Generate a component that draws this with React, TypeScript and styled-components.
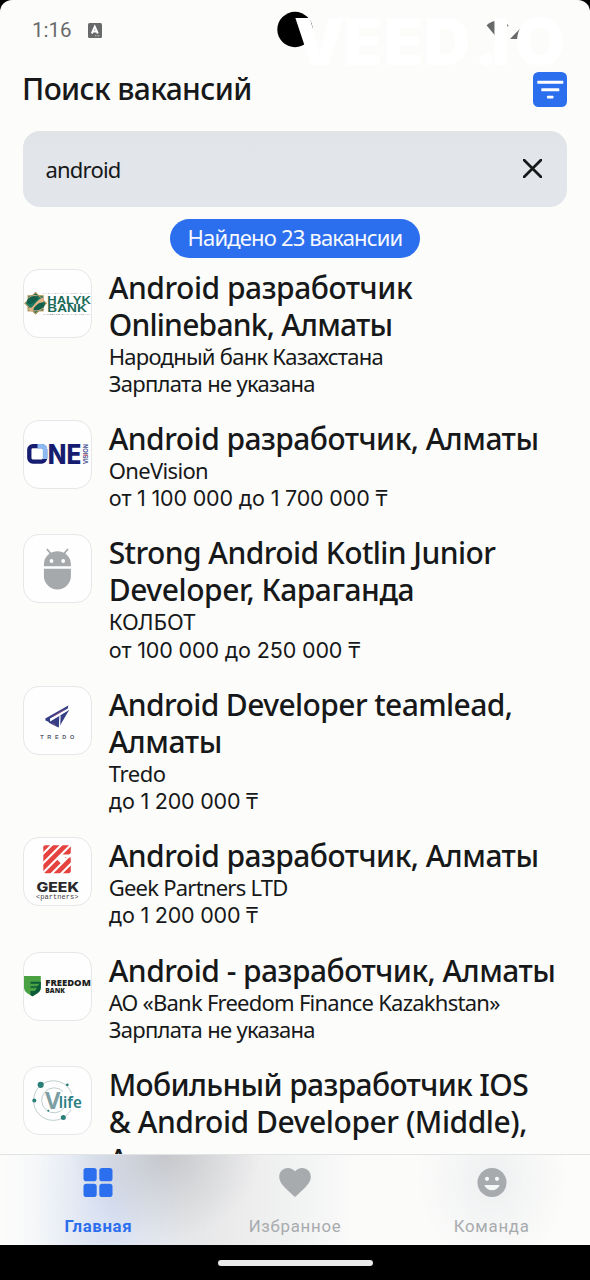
import React from 'react';
import styled, { createGlobalStyle, css } from 'styled-components';

const ink = '#161819';
const blue = '#2c6fee';
const muted = '#a8abae';

const GlobalStyle = createGlobalStyle`
  * { box-sizing: border-box; }
  body { margin: 0; background: #000; }
`;

const Screen = styled.div`
  width: 590px;
  height: 1280px;
  display: flex;
  flex-direction: column;
  background: #000;
  color: ${ink};
  font-family: 'Noto Sans', sans-serif;
  overflow: hidden;
`;

const Page = styled.div`
  height: 1245px;
  display: flex;
  flex-direction: column;
  background: #fcfcfa;
  border-radius: 12px 12px 0 0;
  overflow: hidden;
`;

const StatusBar = styled.div`
  position: relative;
  height: 60px;
  flex: none;
  display: flex;
  align-items: center;
  gap: 16.5px;
  padding: 0 0 0 32px;
  color: #68696a;
  font: 400 20.5px/60px Roboto, sans-serif;
`;

const StatusArt = styled.svg`
  position: absolute;
  left: 270px;
  top: 0;
  overflow: visible;
`;

const Header = styled.header`
  height: 60px;
  margin-top: -1px;
  padding: 0 23px 0 22px;
  flex: none;
  display: flex;
  align-items: center;
  justify-content: space-between;
`;

const Heading = styled.h1`
  margin: 0;
  font-size: 30px;
  font-weight: 500;
  line-height: 40px;
  letter-spacing: -0.62px;
`;

const FilterButton = styled.button`
  width: 34.5px;
  height: 35px;
  padding: 0;
  border: 0;
  border-radius: 5.5px;
  background: ${blue};
  display: block;
`;

const SearchField = styled.div`
  margin: 11.5px 23px 0;
  height: 76.5px;
  flex: none;
  display: flex;
  align-items: center;
  justify-content: space-between;
  padding: 0 25px 0.5px 22.5px;
  border-radius: 17px;
  background: linear-gradient(#e0e4e7, #e2e5ea 40%);
  font-size: 22px;
  letter-spacing: -0.8px;
`;

const CountPill = styled.div`
  align-self: center;
  margin-top: 11.5px;
  width: 249.5px;
  height: 39px;
  flex: none;
  border-radius: 20px;
  background: ${blue};
  color: #f6f9ff;
  text-align: center;
  font-size: 22px;
  line-height: 37.5px;
  letter-spacing: -0.83px;
`;

const List = styled.main`
  flex: 1;
  min-height: 0;
  margin-top: 11.1px;
  overflow: hidden;
`;

const Item = styled.article`
  display: flex;
  gap: 17px;
  padding: 0 0 22.9px 22.7px;
`;

const Logo = styled.div`
  width: 69px;
  height: 69px;
  flex: none;
  border: 1px solid #e6e7e8;
  border-radius: 16px;
  background: #fefefe;
  overflow: hidden;
  svg { display: block; }
`;

const Lines = styled.div`
  flex: 1;
  white-space: nowrap;
`;

const line = css<{ $track: number }>`
  white-space: pre;
  letter-spacing: ${p => p.$track}px;
`;

const Title = styled.div<{ $track: number }>`
  ${line}
  font-size: 30px;
  font-weight: 500;
  line-height: 37px;

  &:nth-child(3) { padding-top: 1px; }
`;

const Detail = styled.div<{ $track: number }>`
  ${line}
  font-size: 22px;
  line-height: 27.25px;
  height: 27.25px;
`;

const Salary = styled(Detail)`
  font-family: Inter, sans-serif;
  font-size: 21.5px;
  line-height: 28.25px;
`;

const Tenge = styled.span`
  font-family: 'Noto Sans', sans-serif;
  font-size: 22px;
  line-height: 1;
`;

const NavBar = styled.nav`
  height: 91.5px;
  flex: none;
  display: flex;
  border-top: 1.5px solid #e2e3e5;
  background:
    radial-gradient(ellipse 95px 85px at 165px 0, rgba(178, 180, 184, 0.62), rgba(190, 192, 196, 0.42) 45%, rgba(220, 220, 220, 0)),
    radial-gradient(ellipse 75px 150px at 112px 50px, rgba(208, 220, 245, 0.7), rgba(215, 225, 245, 0.32) 50%, rgba(225, 231, 245, 0)),
    radial-gradient(ellipse 75px 90px at 492px 25px, rgba(236, 238, 240, 0.9), rgba(245, 246, 247, 0)),
    linear-gradient(90deg, #fcfcfa 0, #f9fafa 20px, #f1f4f7 50px, #e6eaf1 90px, #e6e8ed 140px, #e6e7e8 190px, #ececed 240px, #f3f4f4 310px, #fbfbfa 355px, #fcfcfa 100%);
`;

const NavItem = styled.a<{ $active?: boolean }>`
  flex: 1;
  display: flex;
  flex-direction: column;
  align-items: center;
  padding-top: 11px;
  gap: 17px;
  color: ${p => (p.$active ? blue : muted)};
  font: ${p => (p.$active ? 700 : 400)} 16.8px/22px Roboto, sans-serif;
  letter-spacing: ${p => (p.$active ? 0.65 : 0.75)}px;
`;

const HomeBar = styled.div`
  width: 155px;
  height: 6px;
  margin: 15px auto 0;
  border-radius: 3px;
  background: #ebebeb;
`;

const Halyk = () => (
  <svg width="67" height="67" viewBox="1 1 67 67">
    <g transform="translate(12.6 34.3)">
      <rect x="-7.6" y="-7.6" width="15.2" height="15.2" fill="#1d7a62" stroke="#b79a5f" strokeWidth="1" />
      <rect x="-7.6" y="-7.6" width="15.2" height="15.2" fill="#1d7a62" stroke="#b79a5f" strokeWidth="1" transform="rotate(45)" />
      <path d="M-9.500 5C-5 6-3 3.500-1 1S4-5 8-5.500C9 0 6 0 3.500 2S-1 8-4 8.500Z" fill="#e2b184" />
      <ellipse cx="-3" cy="-4" rx="6.500" ry="3.600" transform="rotate(-35 -3 -4)" fill="#125f4c" />
      <ellipse cx="3.500" cy="3.800" rx="6.500" ry="3.300" transform="rotate(-35 3.500 3.800)" fill="#125f4c" />
      <path d="M-7-5C-5-8-1-8 2-7.500M-2 7.500C2 8 5 7 7.500 4.500" fill="none" stroke="#e2b184" strokeWidth="1" />
    </g>
    <g fill="#1b6b58" fontFamily="Liberation Sans, sans-serif">
      <text x="20" y="24.600" fontSize="2.300" textLength="47.500" fill="#777">КАЗАКСТАН ХАЛЫК БАНКІ</text>
      <text x="24.300" y="34.700" fontSize="10.600" fontWeight="700" textLength="43.500" lengthAdjust="spacingAndGlyphs">HALYK</text>
      <text x="24.300" y="42.700" fontSize="10.600" fontWeight="700" textLength="39.500" lengthAdjust="spacingAndGlyphs">BANK</text>
      <text x="20" y="46.300" fontSize="2.300" textLength="47.500" fill="#555">НАРОДНЫЙ БАНК КАЗАХСТАНА</text>
    </g>
  </svg>
);

const OneVision = () => (
  <svg width="67" height="67" viewBox="1 1 67 67">
    <rect x="6.300" y="26.200" width="15.800" height="15.400" rx="3.500" fill="none" stroke="#161d70" strokeWidth="4.300" />
    <path d="M14.500 26.200h4q3.600 0 3.600 3.600V39" fill="none" stroke="#8db9f2" strokeWidth="4.400" />
    <text x="24.800" y="43.700" fontFamily="Inter, sans-serif" fontWeight="800" fontSize="27" fill="#161d70" textLength="33.500" lengthAdjust="spacingAndGlyphs">NE</text>
    <text transform="translate(65 44) rotate(-90)" fontFamily="Liberation Sans, sans-serif" fontWeight="700" fontSize="6.500" fill="#46508f" textLength="20" lengthAdjust="spacingAndGlyphs">VISION</text>
    <path d="M60.500 35h4" stroke="#e0574f" strokeWidth="1" />
  </svg>
);

const Robot = () => (
  <svg width="67" height="67" viewBox="1 1 67 67" fill="#a5a9ac">
    <path d="M23.800 15l4.800 5.500M45 15l-4.800 5.500" stroke="#a5a9ac" strokeWidth="1.800" />
    <path d="M20.900 32.200V30a13.500 12.800 0 0 1 27 0v2.200Z" />
    <path d="M20.900 34.800h27v7.200a13.500 13.500 0 0 1-27 0Z" />
    <circle cx="28.500" cy="27" r="1.900" fill="#fff" />
    <circle cx="40.200" cy="27" r="1.900" fill="#fff" />
  </svg>
);

const Tredo = () => (
  <svg width="67" height="67" viewBox="1 1 67 67">
    <g fill="#343f86">
      <path d="M22.300 32.500 45.300 19.500 44.800 22.500 27 32.500 27 36.500 22.500 34.500Z" />
      <path d="M25.500 36.500 46.300 23.800 36 41.300 34.800 41.300Z" />
    </g>
    <path d="M27.500 34.300 44.500 24M37 29.500 36.500 41" stroke="#fefefe" strokeWidth="1.300" />
    <path d="M30 30.500 41 24M29.500 37l3 2" stroke="#c85872" strokeWidth=".6" />
    <text x="17.300" y="53" fontFamily="Liberation Sans, sans-serif" fontWeight="700" fontSize="5.500" fill="#51566b" textLength="34">TREDO</text>
  </svg>
);

const Geek = () => (
  <svg width="67" height="67" viewBox="1 1 67 67">
    <defs>
      <clipPath id="geekTile"><rect x="20.300" y="8.300" width="27.500" height="28" rx="2" /></clipPath>
    </defs>
    <g clipPath="url(#geekTile)">
      <path d="M16 16 32 0M16 25.500 41.500 0M16 35 51 0M18 42.500 36 24.500M41 19.500 52 8.500M26 44 54 16M36 43.500 54 25.500" stroke="#e5433f" strokeWidth="4.600" />
      <path d="M38 17.500h11v3h-11z" fill="#fefefe" />
    </g>
    <text x="13.500" y="54.500" fontFamily="Inter, sans-serif" fontWeight="800" fontSize="12.600" fill="#28292b" textLength="42.500" lengthAdjust="spacingAndGlyphs">GEEK</text>
    <text x="13" y="62" fontFamily="Liberation Mono, monospace" fontSize="7" fill="#444" textLength="42.500">&lt;partners&gt;</text>
  </svg>
);

const Freedom = () => (
  <svg width="67" height="67" viewBox="1 1 67 67">
    <path d="M1 24h16.800v11.500c0 4.500-4.500 6.500-8.400 8.800C5.500 42 1 40 1 35.500Z" fill="#49a142" />
    <path d="M7.500 29.800h10.300v5.700c0 4.500-4.500 6.500-8.400 8.800L7.500 43v-4h4.500l2-3.300H7.500v-1.400h7l2-2.500h-9Z" fill="#0b5b3a" />
    <g fontFamily="Open Sans, sans-serif" fontWeight="800" fill="#1c1e20">
      <text x="22.300" y="34" fontSize="9.500" textLength="45.500" lengthAdjust="spacingAndGlyphs">FREEDOM</text>
      <text x="22.300" y="41.300" fontSize="7" textLength="19.500" lengthAdjust="spacingAndGlyphs">BANK</text>
    </g>
  </svg>
);

const Vlife = () => (
  <svg width="67" height="67" viewBox="1 1 67 67">
    <path d="M49 28a19.800 19.800 0 1 0-1 15.500M40 25.500a12.500 12.500 0 1 0 1 16.500" fill="none" stroke="#b9c8c9" strokeWidth=".9" />
    <g fill="#2b7f79">
      <circle cx="17.700" cy="18.800" r="3.100" />
      <circle cx="11.300" cy="34.500" r="2" />
      <circle cx="44.300" cy="18.800" r="1.400" />
      <circle cx="40.300" cy="51.500" r="2.500" />
      <circle cx="25.300" cy="44.800" r="1" />
    </g>
    <text x="22" y="43.200" fontFamily="Noto Sans, sans-serif" fontWeight="700" fontSize="22.500" fill="#7d9ea2" textLength="15.500" lengthAdjust="spacingAndGlyphs">V</text>
    <text x="35.800" y="41.700" fontFamily="Noto Sans, sans-serif" fontWeight="600" fontSize="16" fill="#2b7f83" textLength="23" lengthAdjust="spacingAndGlyphs">life</text>
  </svg>
);

type Text = [string, number];
type Vacancy = { logo: React.ReactNode; title: Text[]; company?: Text; salary?: Text; paid?: boolean };

const vacancies: Vacancy[] = [
  { logo: <Halyk />, title: [['Android разработчик', -0.45], ['Onlinebank, Алматы', -0.78]], company: ['Народный банк Казахстана', -0.74], salary: ['Зарплата не указана', -0.7] },
  { logo: <OneVision />, title: [['Android разработчик, Алматы', -0.52]], company: ['OneVision', -0.65], salary: ['от 1 100 000 до 1 700 000 ', -0.18], paid: true },
  { logo: <Robot />, title: [['Strong Android Kotlin Junior', -0.57], ['Developer, Караганда', -0.44]], company: ['КОЛБОТ', -0.1], salary: ['от 100 000 до 250 000 ', -0.14], paid: true },
  { logo: <Tredo />, title: [['Android Developer teamlead,', -0.6], ['Алматы', -0.45]], company: ['Tredo', -0.4], salary: ['до 1 200 000 ', -0.22], paid: true },
  { logo: <Geek />, title: [['Android разработчик, Алматы', -0.52]], company: ['Geek Partners LTD', -0.76], salary: ['до 1 200 000 ', -0.22], paid: true },
  { logo: <Freedom />, title: [['Android - разработчик, Алматы', -0.5]], company: ['АО «Bank Freedom Finance Kazakhstan»', -0.75], salary: ['Зарплата не указана', -0.7] },
  { logo: <Vlife />, title: [['Мобильный разработчик IOS', -0.64], ['& Android Developer (Middle),', -0.45], ['Алматы', -0.45]] },
];

function VacancyRow({ logo, title, company, salary, paid }: Vacancy) {
  return (
    <Item>
      <Logo>{logo}</Logo>
      <Lines>
        {title.map(([text, track]) => <Title key={text} $track={track}>{text}</Title>)}
        {company && <Detail $track={company[1]}>{company[0]}</Detail>}
        {salary && (paid
          ? <Salary $track={salary[1]}>{salary[0]}<Tenge>₸</Tenge></Salary>
          : <Detail $track={salary[1]}>{salary[0]}</Detail>)}
      </Lines>
    </Item>
  );
}

export default function App() {
  return (
    <Screen>
      <GlobalStyle />
      <Page>
        <StatusBar>
          1:16
          <svg width="14" height="15" viewBox="0 0 14 15">
            <rect width="14" height="15" rx="1.500" fill="#68696a" />
            <path d="M3.800 10.500 6.800 3.700 9.800 10.500M4.800 8.500h4" fill="none" stroke="#fff" strokeWidth="1.900" />
            <path d="M7 12.800h5" stroke="#ddd" strokeWidth=".8" strokeDasharray="1 .6" />
          </svg>
          <StatusArt width="300" height="70" viewBox="270 0 300 70">
            <circle cx="295" cy="29.500" r="17.700" fill="#000" />
            <path d="M486.500 25.200Q497.500 16.500 508.500 25.200L497.500 38.500Z" fill="#68696a" />
            <path d="M528.500 20V39H510Z" fill="#68696a" />
            <text x="294 343 384 424 474 491.500 515" y="65" fontFamily="Inter, sans-serif" fontWeight="900" fontSize="64" fill="#fff">VEED.IO</text>
          </StatusArt>
        </StatusBar>
        <Header>
          <Heading>Поиск вакансий</Heading>
          <FilterButton aria-label="Фильтр">
            <svg width="34.500" height="35" viewBox="0 0 34.500 35" fill="#fff">
              <rect x="4.300" y="8.800" width="26" height="3" rx=".6" />
              <rect x="8.300" y="16.300" width="18" height="3" rx=".6" />
              <rect x="14.100" y="23.700" width="6.300" height="2.800" rx=".6" />
            </svg>
          </FilterButton>
        </Header>
        <SearchField>
          android
          <svg width="19" height="19" viewBox="0 0 19 19"><path d="M1 1l17 17M18 1 1 18" stroke={ink} strokeWidth="2.700" strokeLinecap="round" /></svg>
        </SearchField>
        <CountPill>Найдено 23 вакансии</CountPill>
        <List>{vacancies.map((v, i) => <VacancyRow key={i} {...v} />)}</List>
        <NavBar>
          <NavItem $active>
            <svg width="32" height="32" viewBox="0 0 32 32" fill="currentColor">
              <rect x="1.500" y="2" width="13.200" height="13.200" rx="2.800" /><rect x="17.300" y="2" width="13.200" height="13.200" rx="2.800" />
              <rect x="1.500" y="17.800" width="13.200" height="13.200" rx="2.800" /><rect x="17.300" y="17.800" width="13.200" height="13.200" rx="2.800" />
            </svg>
            Главная
          </NavItem>
          <NavItem>
            <svg width="32" height="32" viewBox="0 0 32 32" fill="currentColor">
              <path d="M16 31l-2.300-2.100C5.500 21.500.2 16.600.2 10.700.2 5.800 4 2 8.900 2c2.800 0 5.400 1.300 7.100 3.300C17.700 3.300 20.300 2 23.100 2c4.900 0 8.700 3.800 8.700 8.700 0 5.900-5.300 10.800-13.500 18.200Z" />
            </svg>
            Избранное
          </NavItem>
          <NavItem>
            <svg width="32" height="32" viewBox="0 0 32 32" fill="currentColor">
              <circle cx="16" cy="16.500" r="14.500" />
              <circle cx="11" cy="12.800" r="2.100" fill="#f6f7f7" /><circle cx="21" cy="12.800" r="2.100" fill="#f6f7f7" />
              <path d="M8.300 19h15.400c-1.200 3.200-4.100 5.300-7.700 5.300S9.500 22.200 8.300 19Z" fill="#f6f7f7" />
            </svg>
            Команда
          </NavItem>
        </NavBar>
      </Page>
      <HomeBar />
    </Screen>
  );
}
